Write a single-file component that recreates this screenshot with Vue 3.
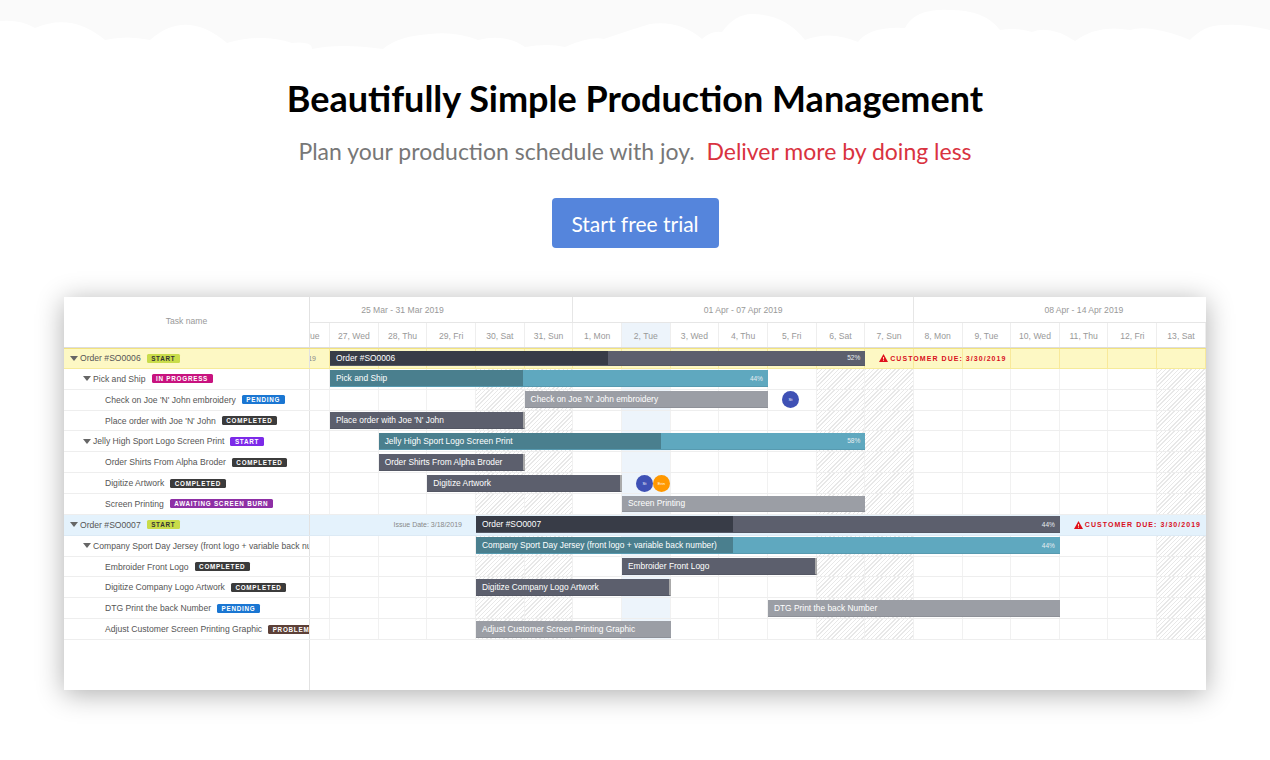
<script setup>
// 25 Mar 2019 is column 0, the track is clipped so it opens on 26 Mar
const names = ['Sun', 'Mon', 'Tue', 'Wed', 'Thu', 'Fri', 'Sat']
const days = Array.from({ length: 21 }, (_, i) => {
  const d = new Date(2019, 2, 25 + i)
  return {
    label: `${d.getDate()}, ${names[d.getDay()]}`,
    weekend: d.getDay() === 0 || d.getDay() === 6,
    today: i === 8
  }
})

const weeks = ['25 Mar - 31 Mar 2019', '01 Apr - 07 Apr 2019', '08 Apr - 14 Apr 2019']

const BADGE = {
  start: { text: 'START', tone: 'lime' },
  startPurple: { text: 'START', tone: 'purple' },
  progress: { text: 'IN PROGRESS', tone: 'pink' },
  pending: { text: 'PENDING', tone: 'blue' },
  completed: { text: 'COMPLETED', tone: 'dark' },
  burn: { text: 'AWAITING SCREEN BURN', tone: 'violet' },
  problem: { text: 'PROBLEM', tone: 'brown' }
}

// from / to = day columns, tone = bar colour, pct = progress part
const rows = [
  { level: 0, name: 'Order #SO0006', badge: 'start', band: 'yellow', from: 2, to: 13, tone: 'order', pct: 52, issue: 'Issue Date: 3/18/2019', due: 'CUSTOMER DUE: 3/30/2019' },
  { level: 1, name: 'Pick and Ship', badge: 'progress', from: 2, to: 11, tone: 'group', pct: 44 },
  { level: 2, name: "Check on Joe 'N' John embroidery", badge: 'pending', from: 6, to: 11, tone: 'todo', people: ['St'] },
  { level: 2, name: "Place order with Joe 'N' John", badge: 'completed', from: 2, to: 6, tone: 'done' },
  { level: 1, name: 'Jelly High Sport Logo Screen Print', badge: 'startPurple', from: 3, to: 13, tone: 'group', pct: 58 },
  { level: 2, name: 'Order Shirts From Alpha Broder', badge: 'completed', from: 3, to: 6, tone: 'done' },
  { level: 2, name: 'Digitize Artwork', badge: 'completed', from: 4, to: 8, tone: 'done', people: ['St', 'Erin'] },
  { level: 2, name: 'Screen Printing', badge: 'burn', from: 8, to: 13, tone: 'todo' },
  { level: 0, name: 'Order #SO0007', badge: 'start', band: 'sky', from: 5, to: 17, tone: 'order', pct: 44, issue: 'Issue Date: 3/18/2019', due: 'CUSTOMER DUE: 3/30/2019' },
  { level: 1, name: 'Company Sport Day Jersey (front logo + variable back number)', barName: 'Company Sport Day Jersey (front logo + variable back number)', from: 5, to: 17, tone: 'group', pct: 44 },
  { level: 2, name: 'Embroider Front Logo', badge: 'completed', from: 8, to: 12, tone: 'done' },
  { level: 2, name: 'Digitize Company Logo Artwork', badge: 'completed', from: 5, to: 9, tone: 'done' },
  { level: 2, name: 'DTG Print the back Number', badge: 'pending', from: 11, to: 17, tone: 'todo' },
  { level: 2, name: 'Adjust Customer Screen Printing Graphic', badge: 'problem', from: 5, to: 9, tone: 'todo' }
]
</script>

<template>
  <div class="page">
    <!-- 상단 구름 -->
    <svg class="clouds" viewBox="0 0 1270 60" width="1270" height="60">
      <path fill="#fafafa" d="M0 0V21Q20 19 35 28Q72 12 105 40Q127 35 150 40Q186 8 227 43Q262 33 292 43Q312 41 312 49Q340 43 383 49Q398 36 430 34Q455 31 478 40Q505 33 525 47Q548 43 565 47Q590 36 604 39Q630 30 650 24Q680 20 702 39Q712 30 722 32Q735 14 752 14Q785 14 805 40Q830 30 858 42Q870 26 905 28Q915 8 950 10Q985 10 1000 30Q1015 27 1032 32Q1050 25 1075 41Q1098 24 1130 30Q1150 24 1190 40Q1205 24 1225 25Q1245 24 1270 30V0Z" />
    </svg>

    <section class="hero">
      <h1>Beautifully Simple Production Management</h1>
      <p class="sub">Plan your production schedule with joy.&nbsp; <span class="red">Deliver more by doing less</span></p>
      <button class="cta">Start free trial</button>
    </section>

    <section class="gantt">
      <!-- 헤더 -->
      <div class="line head">
        <div class="task head-task">Task name</div>
        <div class="track">
          <div class="weeks">
            <div v-for="w in weeks" :key="w" class="week">{{ w }}</div>
          </div>
          <div class="dayrow">
            <div v-for="d in days" :key="d.label" class="day" :class="{ today: d.today }">{{ d.label }}</div>
          </div>
        </div>
      </div>

      <!-- 작업 행 -->
      <div v-for="r in rows" :key="r.name" class="line row" :class="r.band">
        <div class="task" :class="'lv' + r.level">
          <i v-if="r.level < 2" class="caret"></i>
          <span class="name">{{ r.name }}</span>
          <span v-if="r.badge" class="badge" :class="BADGE[r.badge].tone">{{ BADGE[r.badge].text }}</span>
        </div>
        <div class="track">
          <div class="cols">
            <div
              v-for="(d, i) in days"
              :key="i"
              class="cell"
              :class="{ weekend: d.weekend, today: d.today }"
              :style="{ gridColumn: i + 1 }"
            ></div>
            <div v-if="r.issue" class="issue" :style="{ gridColumn: '1 / ' + (r.from + 1) }">{{ r.issue }}</div>
            <div class="bar" :class="r.tone" :style="{ gridColumn: r.from + 1 + ' / ' + (r.to + 1) }">
              <div v-if="r.pct" class="fill" :style="{ width: r.pct + '%' }"></div>
              <span class="bar-name">{{ r.barName || r.name }}</span>
              <span v-if="r.pct" class="pct">{{ r.pct }}%</span>
            </div>
            <div v-if="r.due" class="due" :style="{ gridColumn: r.to + 1 + ' / span 4' }">
              <svg viewBox="0 0 16 14" width="9" height="8">
                <path fill="#e0101c" d="M8 0 16 14H0Z" />
                <path fill="#fdf8c4" d="M7.2 5h1.6v4.5H7.2zM7.2 10.5h1.6v1.6H7.2z" />
              </svg>
              {{ r.due }}
            </div>
            <div v-if="r.people" class="people" :style="{ gridColumn: r.to + 1 + ' / span 3' }">
              <span v-for="p in r.people" :key="p" class="avatar" :class="{ orange: p === 'Erin' }">{{ p }}</span>
            </div>
          </div>
        </div>
      </div>

      <div class="line filler"><div class="task"></div></div>
    </section>
  </div>
</template>

<style scoped>
.page {
  width: 1270px;
  height: 760px;
  overflow: hidden;
  background: #fff;
  font-family: "Liberation Sans", Arial, sans-serif;
}
.clouds { display: block; }

/* 히어로 */
.hero {
  display: flex;
  flex-direction: column;
  align-items: center;
  font-family: Lato, "Liberation Sans", sans-serif;
}
h1 {
  margin: 16px 0 0;
  font-size: 36px;
  line-height: 44px;
  font-weight: 700;
  color: #000;
}
.sub {
  margin: 16px 0 0;
  font-size: 23px;
  line-height: 30px;
  color: #777;
}
.red { color: #d9333f; }
.cta {
  margin-top: 32px;
  width: 167px;
  height: 50px;
  border: 0;
  border-radius: 4px;
  background: #5585dc;
  color: #fff;
  font-family: inherit;
  font-size: 21px;
}

/* 간트 */
.gantt {
  margin: 49px 64px 0;
  height: 393px;
  display: flex;
  flex-direction: column;
  background: #fff;
  box-shadow: 0 4px 26px rgba(0, 0, 0, .32);
  font-size: 8.6px;
  color: #555;
}
.line { display: flex; }
.task {
  flex: none;
  box-sizing: border-box;
  width: 246px;
  border-right: 1px solid #e2e2e2;
  display: flex;
  align-items: center;
  overflow: hidden;
  white-space: nowrap;
}
.track { flex: 1; min-width: 0; overflow: hidden; }

.head { height: 51px; border-bottom: 1px solid #ddd; box-sizing: border-box; color: #999; }
.head-task { justify-content: center; padding-bottom: 2px; }
.weeks, .dayrow, .cols {
  display: grid;
  grid-template-columns: repeat(21, 48.67px);
  width: 1022px;
  margin-left: -77.33px;
}
.weeks { grid-template-columns: repeat(3, 340.67px); height: 25px; border-bottom: 1px solid #e6e6e6; }
.week { display: flex; align-items: center; justify-content: center; border-right: 1px solid #e6e6e6; box-sizing: border-box; }
.dayrow { height: 25px; }
.day { display: flex; align-items: center; justify-content: center; border-right: 1px solid #eee; box-sizing: border-box; white-space: nowrap; }
.day.today { background: #edf4fb; }

.row { height: 20.86px; box-sizing: border-box; border-bottom: 1px solid #eee; }
.lv0 { padding-left: 6px; }
.lv1 { padding-left: 19px; }
.lv2 { padding-left: 41px; }
.caret {
  flex: none;
  width: 0;
  height: 0;
  margin-right: 2px;
  border-left: 4px solid transparent;
  border-right: 4px solid transparent;
  border-top: 5px solid #666;
}
.name { flex: none; }
.badge {
  flex: none;
  margin-left: 6px;
  padding: 0 4.5px;
  height: 9px;
  line-height: 9.5px;
  border-radius: 1.5px;
  font-size: 6.3px;
  font-weight: 700;
  letter-spacing: .75px;
  color: #fff;
}
.lime { background: #c9dc4a; color: #333; }
.purple { background: #7c2ae8; }
.pink { background: #c8137f; }
.blue { background: #1a76d2; }
.dark { background: #3b3b3b; }
.violet { background: #8e2fa5; }
.brown { background: #5d4037; }

.cols { height: 100%; grid-template-rows: 100%; }
.cell { grid-row: 1; border-right: 1px solid #f1f1f1; box-sizing: border-box; }
.cell.weekend { background: repeating-linear-gradient(135deg, #e8e8e8 0 1px, #fff 1px 3px); }
.cell.today { background: #edf4fb; }

/* 강조 행 */
.yellow { background: #fdf8c4; border-top: 1px solid #f2e27e; border-bottom-color: #f6eb9a; }
.sky { background: #e4f2fc; border-bottom-color: #dceaf5; }
.yellow .cell, .sky .cell { background: none; }
.yellow .cell { border-right-color: #f8e99a; }
.sky .cell { border-right-color: #e4f2fc; }

.bar {
  grid-row: 1;
  position: relative;
  margin: 1.5px 0;
  display: flex;
  align-items: center;
  overflow: hidden;
  color: #fff;
  white-space: nowrap;
  font-size: 8.4px;
  border-bottom: 1px solid rgba(0, 0, 0, .08);
}
.order { background: #5c5f6d; }
.order .fill { background: #383c47; }
.group { background: #5fa8bf; }
.group .fill { background: #4a7f8e; }
.todo { background: #9b9ea5; }
.done { background: #5c5f6d; border-right: 2px solid #aaa; }
.fill { position: absolute; left: 0; top: 0; bottom: 0; }
.bar-name { position: relative; padding-left: 6px; }
.pct { position: absolute; right: 5px; font-size: 6.5px; color: #e6edf0; }

.issue {
  grid-row: 1;
  align-self: center;
  justify-self: end;
  padding-right: 14px;
  font-size: 7px;
  color: #888;
  white-space: nowrap;
}
.due {
  grid-row: 1;
  align-self: center;
  margin-left: 14px;
  display: flex;
  align-items: center;
  gap: 2px;
  font-size: 7px;
  font-weight: 700;
  letter-spacing: 1.05px;
  color: #d8101c;
  white-space: nowrap;
}
.people {
  grid-row: 1;
  display: flex;
  align-items: center;
  margin-left: 14px;
}
.avatar {
  width: 17px;
  height: 17px;
  border-radius: 50%;
  background: #3f51b5;
  color: #fff;
  font-size: 4px;
  display: flex;
  align-items: center;
  justify-content: center;
}
.avatar.orange { background: #ff9800; }

.filler { flex: 1; }
</style>

<style>
html, body { margin: 0; background: #fff; }
</style>
